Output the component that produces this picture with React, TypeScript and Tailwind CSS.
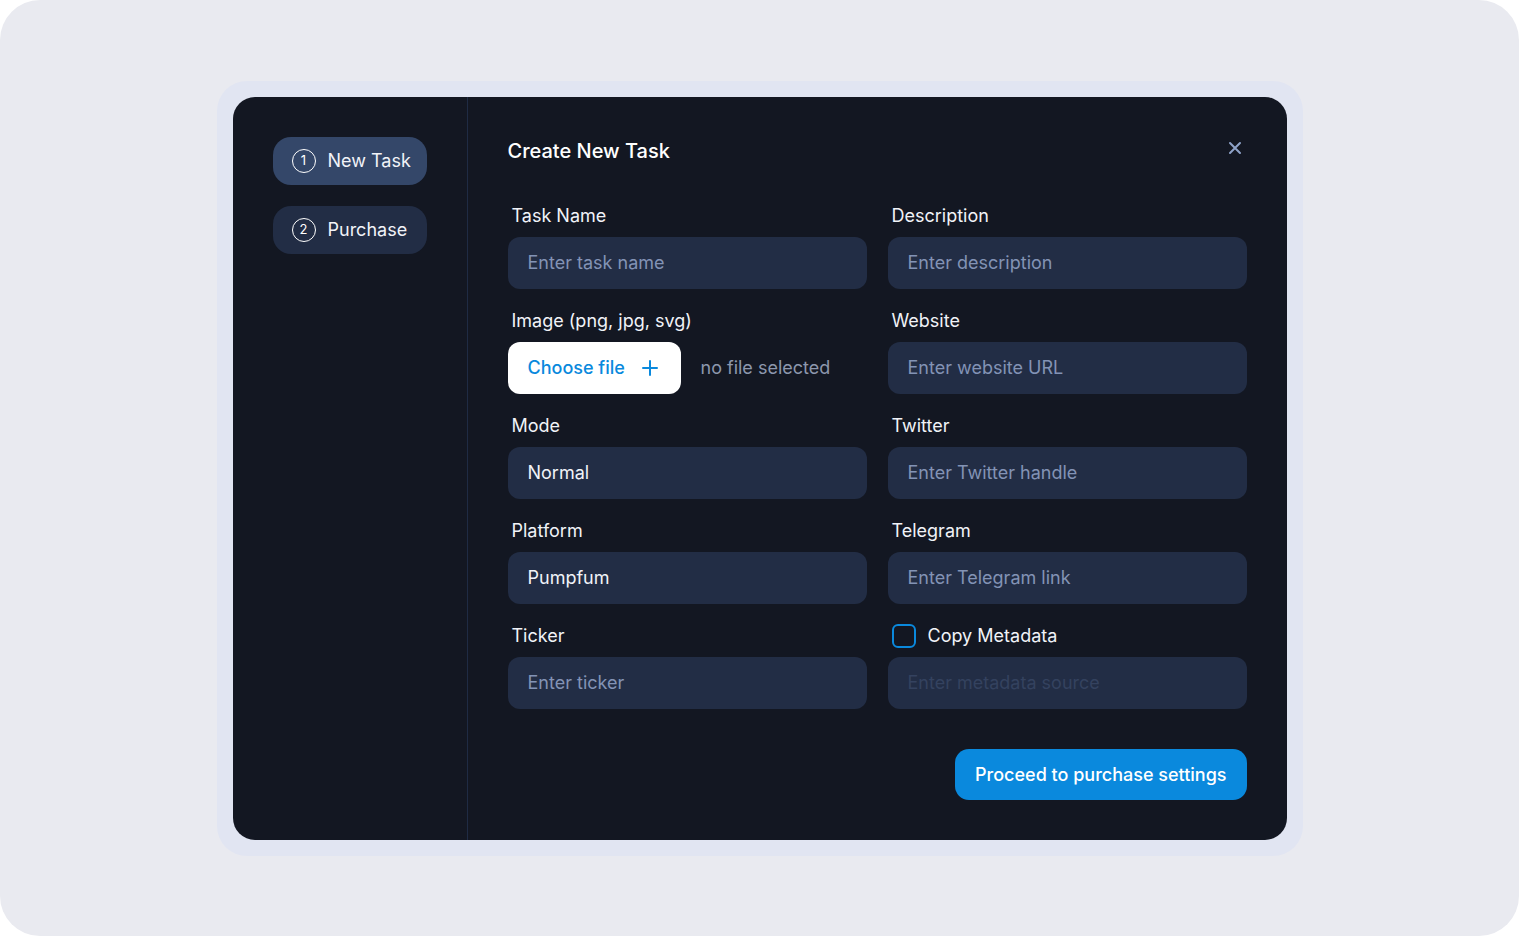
import React from "react";

const font = { fontFamily: "Inter, 'Noto Sans', 'Liberation Sans', sans-serif" };

function StepIcon({ n }: { n: number }) {
  return (
    <span className="flex h-[24px] w-[24px] items-center justify-center rounded-full border-[1.5px] border-white text-[13px] leading-none text-white">
      {n}
    </span>
  );
}

function Field({ label, placeholder, value }: { label: string; placeholder?: string; value?: string }) {
  return (
    <div className="flex flex-col">
      <div className="mb-[9px] h-[24px] pl-[4px] text-[18px] leading-[24px] text-[#f1f3f8]">{label}</div>
      <div className="flex h-[52px] items-center rounded-[12px] bg-[#222d45] px-[20px] text-[18px]">
        {value ? (
          <span className="text-[#f1f3f8]">{value}</span>
        ) : (
          <span className="text-[#8393b5]">{placeholder}</span>
        )}
      </div>
    </div>
  );
}

export default function App() {
  return (
    <div className="h-[937px] w-[1520px] bg-white" style={font}>
      <div className="mr-px flex h-[936px] w-[1519px] items-center justify-center rounded-[40px] bg-[#e9eaf0]">
        <div className="rounded-[30px] bg-[#e1e5f2] p-[16px]">
          <div className="flex h-[743px] w-[1054px] overflow-hidden rounded-[22px] bg-[#131722]">
            {/* Sidebar */}
            <div className="flex w-[235px] shrink-0 flex-col items-start gap-[21px] border-r border-[#1f2b44] px-[40px] pt-[40px]">
              <div className="flex h-[48px] w-[154px] items-center gap-[12px] rounded-[18px] bg-[#344769] pl-[19px] text-[18px] text-[#f1f3f8]">
                <StepIcon n={1} />
                <span>New Task</span>
              </div>
              <div className="flex h-[48px] w-[154px] items-center gap-[12px] rounded-[18px] bg-[#222d45] pl-[19px] text-[18px] text-[#f1f3f8]">
                <StepIcon n={2} />
                <span>Purchase</span>
              </div>
            </div>
            {/* Main */}
            <div className="flex flex-1 flex-col px-[40px] pt-[40px]">
              <div className="flex h-[28px] items-center justify-between">
                <h1 className="text-[20px] font-medium leading-[28px] text-white">Create New Task</h1>
                <svg width="16" height="16" viewBox="0 0 16 16" className="mr-[4px] mb-[6px]">
                  <path d="M3 3 L13 13 M13 3 L3 13" stroke="#8ea2c8" strokeWidth="2" strokeLinecap="round" />
                </svg>
              </div>
              <div className="mt-[39px] grid grid-cols-2 gap-x-[21px] gap-y-[20px]">
                <Field label="Task Name" placeholder="Enter task name" />
                <Field label="Description" placeholder="Enter description" />
                <div className="flex flex-col">
                  <div className="mb-[9px] h-[24px] pl-[4px] text-[18px] leading-[24px] text-[#f1f3f8]">Image (png, jpg, svg)</div>
                  <div className="flex h-[52px] items-center gap-[20px]">
                    <div className="flex h-[52px] w-[173px] items-center gap-[16px] rounded-[12px] bg-white pl-[20px] text-[18px] font-medium text-[#0a89dd]">
                      <span>Choose file</span>
                      <svg width="18" height="18" viewBox="0 0 18 18">
                        <path d="M9 2 V16 M2 9 H16" stroke="#0a89dd" strokeWidth="2" strokeLinecap="round" />
                      </svg>
                    </div>
                    <span className="text-[18px] text-[#8d97ad]">no file selected</span>
                  </div>
                </div>
                <Field label="Website" placeholder="Enter website URL" />
                <Field label="Mode" value="Normal" />
                <Field label="Twitter" placeholder="Enter Twitter handle" />
                <Field label="Platform" value="Pumpfum" />
                <Field label="Telegram" placeholder="Enter Telegram link" />
                <Field label="Ticker" placeholder="Enter ticker" />
                <div className="flex flex-col">
                  <div className="mb-[9px] flex h-[24px] items-center gap-[12px] pl-[4px]">
                    <span className="h-[24px] w-[24px] rounded-[6px] border-2 border-[#0a89dd]" />
                    <span className="text-[18px] leading-[24px] text-[#f1f3f8]">Copy Metadata</span>
                  </div>
                  <div className="flex h-[52px] items-center rounded-[12px] bg-[#222d45] px-[20px] text-[18px]">
                    <span className="text-[#34425f]">Enter metadata source</span>
                  </div>
                </div>
              </div>
              <div className="mt-[40px] flex justify-end">
                <button className="h-[51px] rounded-[14px] bg-[#0a89dd] px-[20px] text-[18px] font-medium text-white">
                  Proceed to purchase settings
                </button>
              </div>
            </div>
          </div>
        </div>
      </div>
    </div>
  );
}
